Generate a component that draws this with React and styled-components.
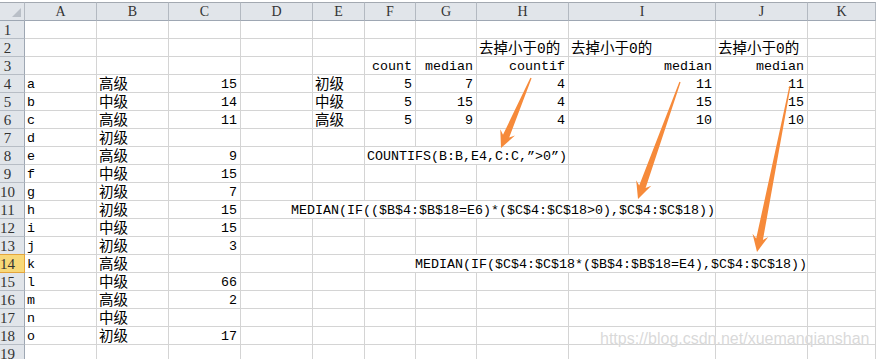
import React from 'react';
import styled, { createGlobalStyle } from 'styled-components';

const Global = createGlobalStyle`
  html, body { margin: 0; padding: 0; background: #fff; }
  body { overflow: hidden; }
`;

const COLS = ['A', 'B', 'C', 'D', 'E', 'F', 'G', 'H', 'I', 'J', 'K'];
const WIDTHS = [72, 72, 72, 72, 52, 51, 61, 92, 147, 92, 68];
const ROWS = 19;
const ACTIVE_ROW = 14;

const Stage = styled.div`
  position: relative;
  width: 876px;
  height: 359px;
  overflow: hidden;
  font-family: "Liberation Mono", "Noto Sans CJK SC", monospace;
  font-size: 13.33px;
  color: #000;
`;

const Sheet = styled.div`
  display: grid;
  grid-template-columns: 25px ${WIDTHS.map((w) => `${w}px`).join(' ')};
  grid-template-rows: 21px repeat(${ROWS}, 18px);
  width: 876px;
`;

const Corner = styled.div`
  position: relative;
  box-sizing: border-box;
  background: #e1e5ea;
  border-top: 1px solid #a3a9b1;
  border-right: 1px solid #b3b9c1;
  border-bottom: 1px solid #9ea7b3;
  margin-top: 2px;
  &::after {
    content: '';
    position: absolute;
    right: 3px;
    bottom: 3px;
    border-style: solid;
    border-width: 0 0 9px 9px;
    border-color: transparent transparent #b9bfc7 transparent;
  }
`;

const ColHeader = styled.div`
  box-sizing: border-box;
  margin-top: 2px;
  background: #e1e5ea;
  border-top: 1px solid #a3a9b1;
  border-right: 1px solid #b3b9c1;
  border-bottom: 1px solid #9ea7b3;
  text-align: center;
  line-height: 17px;
  color: #333;
  font-family: "Liberation Serif", serif;
  font-size: 14px;
`;

const RowHeader = styled.div`
  box-sizing: border-box;
  background: ${(p) => (p.$active ? '#f8d878' : '#e1e5ea')};
  border-right: 1px solid ${(p) => (p.$active ? '#e4a53b' : '#9ea7b3')};
  border-bottom: 1px solid ${(p) => (p.$active ? '#e4a53b' : '#b7bdc5')};
  border-top: ${(p) => (p.$active ? '1px solid #e4a53b' : '0')};
  margin-top: ${(p) => (p.$active ? '-1px' : '0')};
  color: #333;
  text-align: center;
  padding: 1px 9px 0 0;
  line-height: 17px;
  font-family: "Liberation Serif", serif;
  font-size: 15px;
`;

const Cell = styled.div`
  box-sizing: border-box;
  grid-column: span ${(p) => p.$span || 1};
  border-right: 1px solid #d4d4d4;
  border-bottom: 1px solid #d4d4d4;
  padding: 2px 3px 0 2px;
  line-height: 16px;
  white-space: pre;
  text-align: ${(p) => p.$align || 'left'};
  font-size: ${(p) => (p.$cjk ? '14.5px' : '13.33px')};
`;

const Overlay = styled.svg`
  position: absolute;
  left: 0;
  top: 0;
  pointer-events: none;
`;

const Watermark = styled.div`
  position: absolute;
  left: 600px;
  top: 331px;
  font-family: "Liberation Sans", Arial, sans-serif;
  font-size: 16px;
  line-height: 16px;
  color: rgba(210, 210, 210, 0.85);
  text-shadow: 0 0 1px rgba(255, 255, 255, 0.9);
  white-space: nowrap;
`;

// column index: A=0 ... K=10
const L = 'left';
const R = 'right';
const data = {
  2: [
    { c: 7, t: '去掉小于0的', cjk: true },
    { c: 8, t: '去掉小于0的', cjk: true },
    { c: 9, t: '去掉小于0的', cjk: true },
  ],
  3: [
    { c: 5, t: 'count', a: R },
    { c: 6, t: 'median', a: R },
    { c: 7, t: 'countif', a: R },
    { c: 8, t: 'median', a: R },
    { c: 9, t: 'median', a: R },
  ],
  4: [
    { c: 4, t: '初级', cjk: true },
    { c: 5, t: '5', a: R },
    { c: 6, t: '7', a: R },
    { c: 7, t: '4', a: R },
    { c: 8, t: '11', a: R },
    { c: 9, t: '11', a: R },
  ],
  5: [
    { c: 4, t: '中级', cjk: true },
    { c: 5, t: '5', a: R },
    { c: 6, t: '15', a: R },
    { c: 7, t: '4', a: R },
    { c: 8, t: '15', a: R },
    { c: 9, t: '15', a: R },
  ],
  6: [
    { c: 4, t: '高级', cjk: true },
    { c: 5, t: '5', a: R },
    { c: 6, t: '9', a: R },
    { c: 7, t: '4', a: R },
    { c: 8, t: '10', a: R },
    { c: 9, t: '10', a: R },
  ],
  8: [{ c: 5, span: 3, t: 'COUNTIFS(B:B,E4,C:C,”>0”)' }],
  11: [{ c: 3, span: 6, t: '      MEDIAN(IF(($B$4:$B$18=E6)*($C$4:$C$18>0),$C$4:$C$18))' }],
  14: [{ c: 5, span: 5, t: '      MEDIAN(IF($C$4:$C$18*($B$4:$B$18=E4),$C$4:$C$18))' }],
};

const listA = [
  ['a', '高级', '15'],
  ['b', '中级', '14'],
  ['c', '高级', '11'],
  ['d', '初级', ''],
  ['e', '高级', '9'],
  ['f', '中级', '15'],
  ['g', '初级', '7'],
  ['h', '初级', '15'],
  ['i', '中级', '15'],
  ['j', '初级', '3'],
  ['k', '高级', ''],
  ['l', '中级', '66'],
  ['m', '高级', '2'],
  ['n', '中级', ''],
  ['o', '初级', '17'],
];
listA.forEach(([a, b, c], i) => {
  const r = i + 4;
  data[r] = [
    { c: 0, t: a },
    { c: 1, t: b, cjk: true },
    { c: 2, t: c, a: R },
    ...(data[r] || []),
  ];
});

function rowCells(r) {
  const defs = data[r] || [];
  const out = [];
  let col = 0;
  while (col < COLS.length) {
    const d = defs.find((x) => x.c === col);
    if (d) {
      out.push(
        <Cell key={col} $span={d.span} $align={d.a || L} $cjk={d.cjk}>
          {d.t}
        </Cell>
      );
      col += d.span || 1;
    } else {
      out.push(<Cell key={col} />);
      col += 1;
    }
  }
  return out;
}

function arrowPoints(x1, y1, x2, y2) {
  const dx = x2 - x1;
  const dy = y2 - y1;
  const len = Math.hypot(dx, dy);
  const ux = dx / len;
  const uy = dy / len;
  const nx = -uy;
  const ny = ux;
  const w0 = 0.6;
  const w1 = 3.4;
  const headJoin = 13;
  const headBack = 17;
  const headW = 8;
  const bx = x2 - ux * headJoin;
  const by = y2 - uy * headJoin;
  const hx = x2 - ux * headBack;
  const hy = y2 - uy * headBack;
  const pts = [
    [x1 + nx * w0, y1 + ny * w0],
    [bx + nx * w1, by + ny * w1],
    [hx + nx * headW, hy + ny * headW],
    [x2, y2],
    [hx - nx * headW, hy - ny * headW],
    [bx - nx * w1, by - ny * w1],
    [x1 - nx * w0, y1 - ny * w0],
  ];
  return pts.map((p) => `${p[0].toFixed(1)},${p[1].toFixed(1)}`).join(' ');
}

const ARROWS = [
  [531, 78, 501, 148],
  [680, 82, 638, 199],
  [790, 86, 757, 252],
];

export default function App() {
  return (
    <>
      <Global />
      <Stage>
        <Sheet>
          <Corner />
          {COLS.map((c) => (
            <ColHeader key={c}>{c}</ColHeader>
          ))}
          {Array.from({ length: ROWS }, (_, i) => i + 1).map((r) => (
            <React.Fragment key={r}>
              <RowHeader $active={r === ACTIVE_ROW}>{r}</RowHeader>
              {rowCells(r)}
            </React.Fragment>
          ))}
        </Sheet>
        <Overlay width="876" height="359" viewBox="0 0 876 359">
          {ARROWS.map((a, i) => (
            <polygon key={i} points={arrowPoints(...a)} fill="#f68a3a" />
          ))}
        </Overlay>
        <Watermark>https://blog.csdn.net/xuemanqianshan</Watermark>
      </Stage>
    </>
  );
}
